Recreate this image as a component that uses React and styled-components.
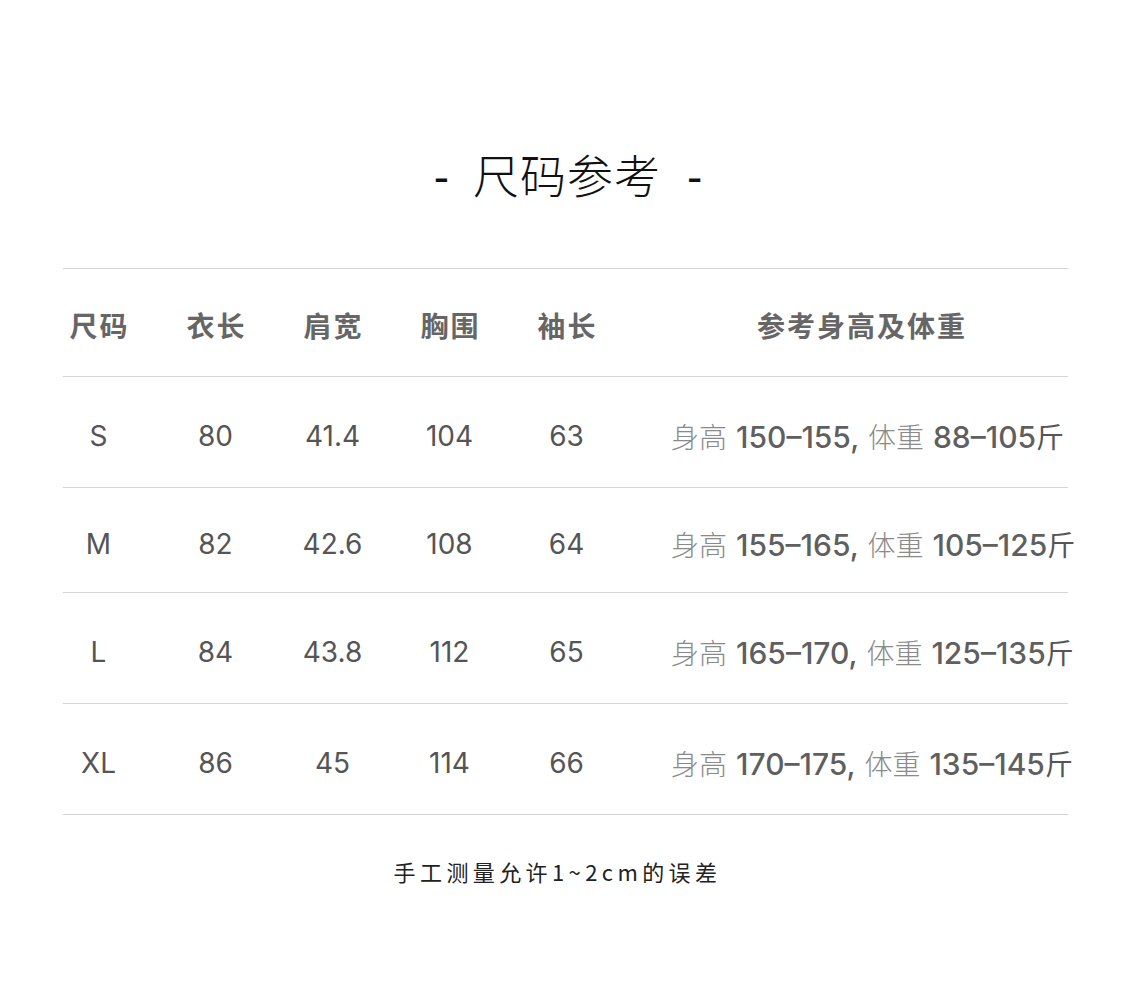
import React from 'react';
import styled, { createGlobalStyle } from 'styled-components';

const GlobalStyle = createGlobalStyle`
  html, body {
    margin: 0;
    padding: 0;
    background: #fff;
  }
  body {
    font-family: "Noto Sans CJK SC", "Noto Sans", sans-serif;
  }
`;

const rows = [
  { size: 'S', len: '80', shoulder: '41.4', chest: '104', sleeve: '63', h: '150–155', w: '88–105', rh: 110 },
  { size: 'M', len: '82', shoulder: '42.6', chest: '108', sleeve: '64', h: '155–165', w: '105–125', rh: 104 },
  { size: 'L', len: '84', shoulder: '43.8', chest: '112', sleeve: '65', h: '165–170', w: '125–135', rh: 110 },
  { size: 'XL', len: '86', shoulder: '45', chest: '114', sleeve: '66', h: '170–175', w: '135–145', rh: 110 },
];

function SizeChart() {
  return (
    <Page>
      <GlobalStyle />
      <Title>
        <Dash $gap="left">-</Dash>尺码参考<Dash $gap="right">-</Dash>
      </Title>

      <Table>
        <Row $height={107}>
          <Cells>
            <Head>尺码</Head>
            <Head>衣长</Head>
            <Head>肩宽</Head>
            <Head>胸围</Head>
            <Head>袖长</Head>
            <Head>参考身高及体重</Head>
          </Cells>
        </Row>

        {rows.map((r) => (
          <Row key={r.size} $height={r.rh}>
            <Cells>
              <Cell>{r.size}</Cell>
              <Cell>{r.len}</Cell>
              <Cell>{r.shoulder}</Cell>
              <Cell>{r.chest}</Cell>
              <Cell>{r.sleeve}</Cell>
              <Ref>
                <Light>身高</Light> {r.h}, <Light>体重</Light> {r.w}
                <Jin>斤</Jin>
              </Ref>
            </Cells>
          </Row>
        ))}
      </Table>

      <Note>手工测量允许1~2cm的误差</Note>
    </Page>
  );
}

export default function App() {
  return <SizeChart />;
}

const Page = styled.div`
  width: 1125px;
  min-height: 987px;
  padding-top: 143px;
  box-sizing: border-box;
`;

const Title = styled.h1`
  margin: 0;
  text-align: center;
  font-family: "Noto Sans CJK SC", sans-serif;
  font-weight: 300;
  font-size: 46px;
  line-height: 60px;
  color: #111;
  letter-spacing: 1px;
  padding-left: 12px;
`;

const Dash = styled.span`
  display: inline-block;
  font-family: "Liberation Sans", sans-serif;
  font-weight: 400;
  margin: ${(p) => (p.$gap === 'left' ? '0 23px 0 0' : '0 0 0 26px')};
`;

const Table = styled.div`
  margin: 61px 57px 0 63px;
  border-top: 1px solid #d3d3d3;
`;

const Row = styled.div`
  height: ${(p) => p.$height}px;
  border-bottom: 1px solid #d3d3d3;
  display: flex;
  align-items: center;
`;

const Cells = styled.div`
  display: grid;
  grid-template-columns: repeat(5, 117px) 1fr;
  width: 1057px;
  margin-left: -23px;
  flex-shrink: 0;
  align-items: center;
`;

const Head = styled.div`
  text-align: center;
  font-family: "Noto Sans CJK SC", sans-serif;
  font-weight: 700;
  font-size: 28px;
  letter-spacing: 2px;
  text-indent: 2px;
  color: #666;
  line-height: 40px;
  padding-top: 4px;
`;

const Cell = styled.div`
  text-align: center;
  font-family: Inter, "Noto Sans CJK SC", sans-serif;
  font-weight: 400;
  font-size: 28px;
  color: #555;
  line-height: 40px;
  padding-top: 8px;
  white-space: nowrap;
`;

const Ref = styled(Cell)`
  text-align: left;
  font-weight: 500;
  font-size: 30px;
  color: #5f5f5f;
  padding-left: 46px;
  word-spacing: 1px;
`;

const Light = styled.span`
  font-family: "Noto Sans CJK SC", sans-serif;
  font-weight: 300;
  font-size: 28px;
  color: #8a8a8a;
`;

const Jin = styled.span`
  font-family: "Noto Sans CJK SC", sans-serif;
  font-weight: 400;
  font-size: 28px;
  color: #555;
`;

const Note = styled.p`
  margin: 41px 0 0;
  padding-right: 10px;
  text-align: center;
  font-family: "Noto Sans CJK SC", sans-serif;
  font-size: 22px;
  line-height: 30px;
  letter-spacing: 4.4px;
  color: #222;
`;
